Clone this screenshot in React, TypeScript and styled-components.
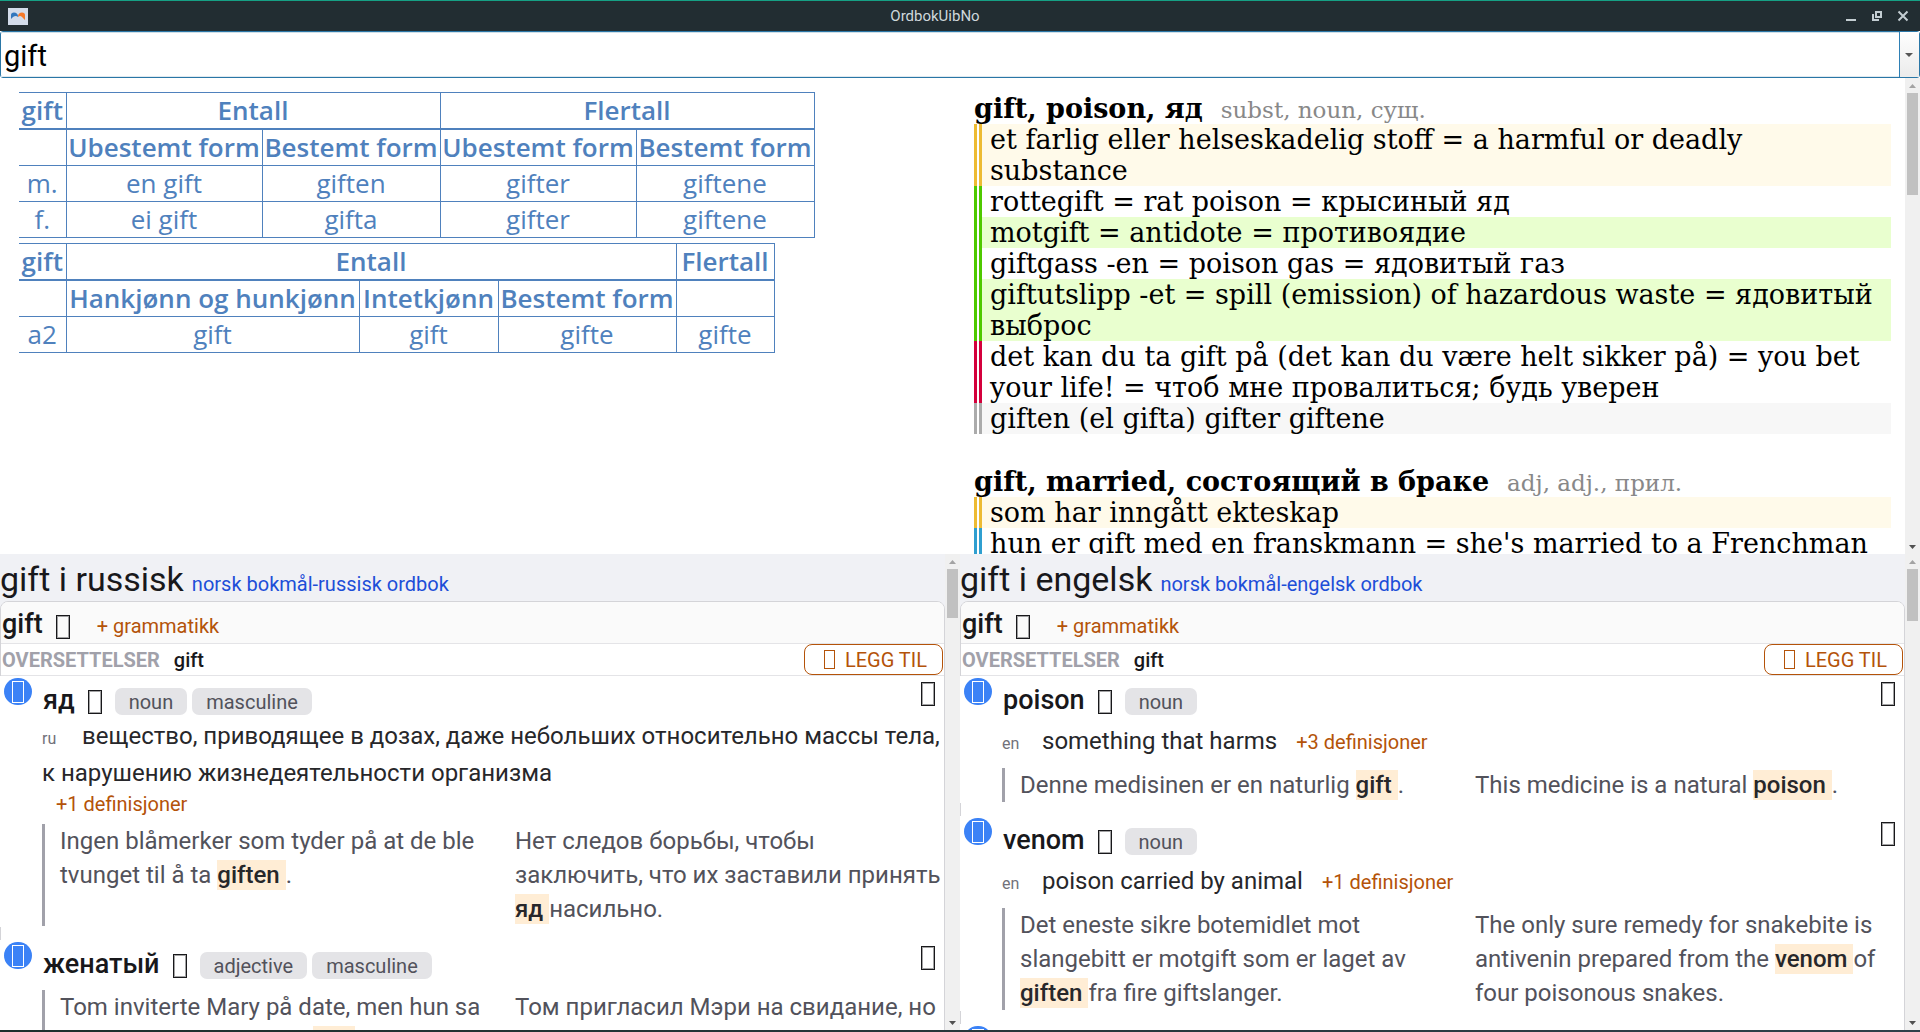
import React, { useState } from 'react';
import styled, { createGlobalStyle, css } from 'styled-components';

const GlobalStyle = createGlobalStyle`
  *, *::before, *::after { box-sizing: border-box; }
  html, body, #root { height: 100%; margin: 0; }
  body { background: #fff; overflow: hidden; font-family: Roboto, sans-serif; }
  button, input { font: inherit; color: inherit; }
`;

/* ---------- window frame ---------- */

const Window = styled.div`
  display: flex;
  flex-direction: column;
  height: 100vh;
  background: #fff;
`;

const TitleBar = styled.header`
  display: flex;
  align-items: center;
  flex: none;
  height: 31px;
  padding: 0 10px 0 8px;
  border-top: 1px solid #16a085;
  background: #222d32;
  color: #cfd8dc;
`;

const WindowTitle = styled.h1`
  flex: 1;
  margin: 0;
  text-align: center;
  font-size: 15px;
  font-weight: 400;
`;

const WindowControls = styled.div`
  display: flex;
  gap: 10px;
`;

const ControlButton = styled.button`
  display: flex;
  width: 16px;
  height: 16px;
  padding: 0;
  border: 0;
  background: none;
  color: #c3cdd2;
`;

const DesktopEdge = styled.div`
  flex: none;
  height: 2px;
  background: linear-gradient(90deg, #1d2f2c, #26363a 50%, #2f404a);
`;

/* ---------- search ---------- */

const SearchBar = styled.form`
  display: flex;
  flex: none;
  height: 47px;
  border: 1px solid #2a76a6;
  border-radius: 3px;
  background: #fff;
`;

const SearchInput = styled.input`
  flex: 1;
  min-width: 0;
  padding: 2px 3px 0;
  border: 0;
  outline: 0;
  background: transparent;
  color: #000;
  font-size: 29px;
  box-shadow: inset 0 1px 0 #cfdfe8, inset 0 -1px 0 #dfe9ef;
`;

const SearchDrop = styled.button`
  display: flex;
  align-items: center;
  justify-content: center;
  width: 20px;
  padding: 0 2px 0 0;
  border: 0;
  border-left: 1px solid #2f80b5;
  background: linear-gradient(#fefefe, #ebebeb);
  color: #555;
`;

/* ---------- panes ---------- */

const Panes = styled.main`
  display: grid;
  flex: 1;
  min-height: 0;
  grid-template-columns: 1fr 1fr;
  grid-template-rows: 1fr 1fr;
`;

const Pane = styled.section`
  display: flex;
  min-width: 0;
  min-height: 0;
  overflow: hidden;
`;

const PaneBody = styled.div`
  flex: 1;
  min-width: 0;
  overflow: hidden;
`;

const Track = styled.div`
  display: flex;
  flex: none;
  flex-direction: column;
  align-items: center;
  width: 15px;
  background: #f0f0f0;
`;

const Arrow = styled.span<{ $dim?: boolean }>`
  display: flex;
  flex: none;
  align-items: center;
  height: 15px;
  color: ${(p) => (p.$dim ? '#a3a3a3' : '#505050')};
`;

const Thumb = styled.span`
  width: 11px;
  margin-bottom: auto;
  background: #c1c1c1;
`;

function Scrollbar({ length }: { length: number }) {
  return (
    <Track aria-hidden="true">
      <Arrow $dim>
        <svg width="7" height="4" viewBox="0 0 7 4"><path d="M3.5 0 7 4H0z" fill="currentColor" /></svg>
      </Arrow>
      <Thumb style={{ height: length }} />
      <Arrow>
        <svg width="7" height="4" viewBox="0 0 7 4"><path d="M0 0H7L3.5 4z" fill="currentColor" /></svg>
      </Arrow>
    </Track>
  );
}

/* ---------- inflection tables ---------- */

const Tables = styled.div`
  display: flex;
  flex-direction: column;
  align-items: flex-start;
  gap: 5px;
  padding: 14px 19px;
`;

const Inflection = styled.table`
  border-collapse: collapse;
  color: #4f81bd;
  font-family: "Trebuchet MS", "Open Sans", sans-serif;
  font-size: 26px;
  line-height: 35px;
  text-align: center;

  th, td {
    height: 36px;
    padding: 0;
    border: 1px solid #4f81bd;
    white-space: nowrap;
  }
  th { font-weight: 600; }
  tr > :first-child { border-left: 0; }
  thead tr:first-child th { border-bottom-width: 2px; }
`;

const Col = styled.col<{ $w: number }>`
  width: ${(p) => p.$w}px;
`;

/* ---------- local dictionary ---------- */

const Article = styled.article`
  padding: 15px 14px 0;
  margin-bottom: 17px;
  color: #000;
  font-family: "DejaVu Serif", serif;
  font-size: 27px;
  line-height: 31px;
`;

const Headword = styled.h2`
  margin: 0;
  font-size: 27px;
  font-weight: 700;
`;

const WordClass = styled.small`
  margin-left: 18px;
  color: #888;
  font-size: 23px;
  font-weight: 400;
  line-height: 1;
`;

const tones = {
  meaning: ['#edbb33', '#fffaea'],
  compound: ['#4fc900', '#fff'],
  compoundAlt: ['#4fc900', '#e9ffcf'],
  idiom: ['#d4003c', '#fff'],
  forms: ['#ababab', '#f7f7f7'],
  example: ['#2f9fd0', '#fff'],
};

/* A twin rule runs down the left side of every line. */
const Line = styled.p<{ $tone: keyof typeof tones }>`
  margin: 0;
  padding: 0 8px 0 16px;
  background: ${({ $tone }) => {
    const [rule, fill] = tones[$tone];
    return `linear-gradient(90deg, ${rule} 3px, #fff 3px 5px, ${rule} 5px 8px, ${fill} 8px)`;
  }};
`;

/* ---------- online dictionary ---------- */

const PageHead = styled.header`
  display: flex;
  align-items: baseline;
  gap: 8px;
  height: 47px;
  background: #f0f1f5;
`;

const PageTitle = styled.h2`
  margin: 0;
  color: #18181b;
  font-size: 34px;
  font-weight: 400;
  line-height: 51px;
`;

const PageLink = styled.a`
  color: #1d4ed8;
  font-size: 20px;
  text-decoration: none;
`;

const CardWrap = styled.div`
  background: linear-gradient(#f0f1f5 10px, #fff 10px);
`;

const Card = styled.div`
  border: 1px solid #d4d4d8;
  border-radius: 8px 8px 0 0;
  background: #fff;
`;

const CardHead = styled.div`
  display: flex;
  align-items: baseline;
  height: 42px;
  padding-left: 1px;
  border-bottom: 1px solid #e4e4e7;
  border-radius: 7px 7px 0 0;
  background: #fafafa;
  color: #18181b;
`;

const Lemma = styled.h3`
  margin: 0;
  color: #18181b;
  font-size: 27px;
  font-weight: 500;
  line-height: 44px;
`;

const EntryWord = styled.h5`
  margin: 0;
  color: #18181b;
  font-size: 27px;
  font-weight: 500;
  line-height: 25px;
`;

const glyphSize = {
  small: css`width: 11px; height: 19px; border: 1px solid currentColor;`,
  badge: css`width: 12px; height: 22px; border: 1px solid currentColor;`,
  large: css`width: 14px; height: 24px; border: 1px solid currentColor; box-shadow: inset 0 0 0 1px rgba(24, 24, 27, 0.4);`,
};

const Glyph = styled.span<{ $size: keyof typeof glyphSize }>`
  display: inline-block;
  flex: none;
  ${(p) => glyphSize[p.$size]}
`;

const IconButton = styled.button`
  display: flex;
  padding: 0;
  border: 0;
  background: none;
  color: #18181b;
`;

const TextButton = styled.button`
  padding: 0;
  border: 0;
  background: none;
  color: #b45309;
  font-size: 20px;
  line-height: 24px;
`;

const HeadIcon = styled.span`
  align-self: center;
  margin: 8px 27px 0 13px;
`;

const SectionHead = styled.div`
  display: flex;
  align-items: center;
  gap: 14px;
  height: 32px;
  padding: 0 1px;
  border-bottom: 1px solid #e4e4e7;
  font-size: 20px;
`;

const SectionTitle = styled.h4`
  margin: 0;
  color: #a1a1aa;
  font-size: 20px;
  font-weight: 700;
`;

const SectionWord = styled.span`
  flex: 1;
  color: #18181b;
  font-weight: 500;
`;

const AddButton = styled.button`
  display: flex;
  align-items: center;
  gap: 10px;
  height: 31px;
  padding: 0 15px 0 19px;
  border: 1px solid #b45309;
  border-radius: 8px;
  background: #fff;
  color: #b45309;
  font-size: 20px;
`;

const Entries = styled.div`
  display: flex;
  flex-direction: column;
  gap: 13px;
`;

/* Each entry spans the card's left border, which shows only between entries. */
const Entry = styled.article`
  display: flex;
  gap: 10px;
  margin-left: -1px;
  padding: 2px 0 1px 4px;
  background: #fff;
`;

const Rank = styled.span`
  display: flex;
  flex: none;
  align-items: center;
  justify-content: center;
  width: 28px;
  height: 27px;
  border-radius: 14px;
  background: #3b82f6;
  color: #fff;
`;

const EntryBody = styled.div`
  flex: 1;
  min-width: 0;
`;

const EntryHead = styled.div`
  display: flex;
  align-items: flex-start;
  height: 40px;
  padding: 10px 9px 0 1px;
  line-height: 28px;
`;

const SpeakIcon = styled(IconButton)`
  margin: 2px 13px 0 13px;
`;

const MenuIcon = styled(IconButton)`
  margin: -6px 0 0 auto;
`;

const Tag = styled.span`
  height: 27px;
  margin-right: 5px;
  padding: 0 14px;
  border-radius: 7px;
  background: #e4e4e7;
  color: #52525b;
  font-size: 20px;
`;

const Definition = styled.div<{ $inline?: boolean }>`
  display: ${(p) => (p.$inline ? 'flex' : 'block')};
  align-items: baseline;
  gap: 19px;
  padding: ${(p) => (p.$inline ? '5px 0 0' : '0')};
  color: #27272a;
  font-size: 24px;
  line-height: 37px;
`;

const Sense = styled.p`
  margin: 0;
`;

const Lang = styled.span`
  display: inline-block;
  width: 40px;
  color: #71717a;
  font-size: 16px;
  line-height: 16px;
`;

const MoreRow = styled.div`
  display: flex;
  padding-left: 14px;
  line-height: 24px;
`;

const Example = styled.div`
  display: grid;
  grid-template-columns: 1fr 1fr;
  gap: 26px;
  margin-top: 8px;
  padding-left: 15px;
  border-left: 3px solid #a1a1aa;
  color: #52525b;
  font-size: 24px;
  line-height: 34px;
`;

const Quote = styled.p`
  margin: 0;
`;

const Mark = styled.mark`
  padding: 1px 0;
  background: #ffedd5;
  color: #27272a;
  font-weight: 500;
  white-space: pre-wrap;
`;

type ExampleText = [string, string, string];

interface EntryData {
  word: string;
  tags: string[];
  lang?: string;
  sense?: string;
  more?: string;
  inline?: boolean;
  from: ExampleText;
  to: ExampleText;
}

function Phrase({ text }: { text: ExampleText }) {
  return (
    <Quote>
      {text[0]}
      {text[1] && <Mark>{text[1] + ' '}</Mark>}
      {text[2]}
    </Quote>
  );
}

function Translation({ entry }: { entry: EntryData }) {
  return (
    <Entry>
      <Rank aria-hidden="true"><Glyph $size="badge" /></Rank>
      <EntryBody>
        <EntryHead>
          <EntryWord>{entry.word}</EntryWord>
          <SpeakIcon type="button" aria-label={`Lytt til ${entry.word}`}><Glyph $size="large" /></SpeakIcon>
          {entry.tags.map((t) => <Tag key={t}>{t}</Tag>)}
          <MenuIcon type="button" aria-label="Meny"><Glyph $size="large" /></MenuIcon>
        </EntryHead>
        {entry.sense && (
          <Definition $inline={entry.inline}>
            <Sense><Lang>{entry.lang}</Lang>{entry.sense}</Sense>
            {entry.inline
              ? <TextButton type="button">{entry.more}</TextButton>
              : <MoreRow><TextButton type="button">{entry.more}</TextButton></MoreRow>}
          </Definition>
        )}
        <Example>
          <Phrase text={entry.from} />
          <Phrase text={entry.to} />
        </Example>
      </EntryBody>
    </Entry>
  );
}

interface DictionaryProps {
  title: string;
  link: string;
  thumb: number;
  entries: EntryData[];
}

function OnlineDictionary({ title, link, thumb, entries }: DictionaryProps) {
  return (
    <Pane>
      <PaneBody>
        <PageHead>
          <PageTitle>{title}</PageTitle>
          <PageLink href="#ordbok">{link}</PageLink>
        </PageHead>
        <CardWrap>
          <Card>
            <CardHead>
              <Lemma>gift</Lemma>
              <HeadIcon><IconButton type="button" aria-label="Lytt til gift"><Glyph $size="large" /></IconButton></HeadIcon>
              <TextButton type="button">+ grammatikk</TextButton>
            </CardHead>
            <SectionHead>
              <SectionTitle>OVERSETTELSER</SectionTitle>
              <SectionWord>gift</SectionWord>
              <AddButton type="button"><Glyph $size="small" />LEGG TIL</AddButton>
            </SectionHead>
            <Entries>
              {entries.map((e) => <Translation key={e.word} entry={e} />)}
            </Entries>
          </Card>
        </CardWrap>
      </PaneBody>
      <Scrollbar length={thumb} />
    </Pane>
  );
}

const russian: EntryData[] = [
  {
    word: 'яд',
    tags: ['noun', 'masculine'],
    lang: 'ru',
    sense: 'вещество, приводящее в дозах, даже небольших относительно массы тела, к нарушению жизнедеятельности организма',
    more: '+1 definisjoner',
    from: ['Ingen blåmerker som tyder på at de ble tvunget til å ta ', 'giften', '.'],
    to: ['Нет следов борьбы, чтобы заключить, что их заставили принять ', 'яд', 'насильно.'],
  },
  {
    word: 'женатый',
    tags: ['adjective', 'masculine'],
    from: ['Tom inviterte Mary på date, men hun sa nei, for hun var allerede ', 'gift', '.'],
    to: ['Том пригласил Мэри на свидание, но она отказалась.', '', ''],
  },
];

const english: EntryData[] = [
  {
    word: 'poison',
    tags: ['noun'],
    lang: 'en',
    sense: 'something that harms',
    more: '+3 definisjoner',
    inline: true,
    from: ['Denne medisinen er en naturlig ', 'gift', '.'],
    to: ['This medicine is a natural ', 'poison', '.'],
  },
  {
    word: 'venom',
    tags: ['noun'],
    lang: 'en',
    sense: 'poison carried by animal',
    more: '+1 definisjoner',
    inline: true,
    from: ['Det eneste sikre botemidlet mot slangebitt er motgift som er laget av ', 'giften', 'fra fire giftslanger.'],
    to: ['The only sure remedy for snakebite is antivenin prepared from the ', 'venom', 'of four poisonous snakes.'],
  },
  {
    word: 'married',
    tags: ['adjective'],
    from: ['Hun er ', 'gift', '.'],
    to: ['She is ', 'married', '.'],
  },
];

export default function App() {
  const [query, setQuery] = useState('gift');
  return (
    <>
      <GlobalStyle />
      <Window>
        <TitleBar>
          <svg width="20" height="17" viewBox="0 0 20 17" aria-hidden="true">
            <rect width="20" height="17" fill="#d3dcea" />
            <path d="M3 11V7Q3 4.500 6 4.500Q9.500 4.500 10 8V9Q8 7 5 9Z" fill="#3277bd" />
            <path d="M17 12V7Q17 4.500 14 4.500Q10.500 4.500 10 8V9Q12 7 14 9Z" fill="#f5792a" />
          </svg>
          <WindowTitle>OrdbokUibNo</WindowTitle>
          <WindowControls>
            <ControlButton type="button" aria-label="Minimer">
              <svg width="16" height="16" viewBox="0 0 16 16"><path d="M4 12h10" stroke="currentColor" strokeWidth="2" /></svg>
            </ControlButton>
            <ControlButton type="button" aria-label="Gjenopprett">
              <svg width="16" height="16" viewBox="0 0 16 16"><path d="M8 4h5v5H8zM5 6v6h6" fill="none" stroke="currentColor" strokeWidth="2" /></svg>
            </ControlButton>
            <ControlButton type="button" aria-label="Lukk">
              <svg width="16" height="16" viewBox="0 0 16 16"><path d="M4.500 3.500l9 9m0-9l-9 9" stroke="currentColor" strokeWidth="2" /></svg>
            </ControlButton>
          </WindowControls>
        </TitleBar>

        <SearchBar role="search" onSubmit={(e) => e.preventDefault()}>
          <SearchInput aria-label="Søk" value={query} onChange={(e) => setQuery(e.target.value)} />
          <SearchDrop type="button" aria-label="Vis historikk">
            <svg width="8" height="4" viewBox="0 0 8 4"><path d="M0 0H8L4 4z" fill="currentColor" /></svg>
          </SearchDrop>
        </SearchBar>

        <Panes>
          <Pane>
            <Tables>
              <Inflection>
                <colgroup><Col $w={47} /><Col $w={196} /><Col $w={178} /><Col $w={196} /><Col $w={178} /></colgroup>
                <thead>
                  <tr><th>gift</th><th colSpan={2}>Entall</th><th colSpan={2}>Flertall</th></tr>
                  <tr><th></th><th>Ubestemt form</th><th>Bestemt form</th><th>Ubestemt form</th><th>Bestemt form</th></tr>
                </thead>
                <tbody>
                  <tr><td>m.</td><td>en gift</td><td>giften</td><td>gifter</td><td>giftene</td></tr>
                  <tr><td>f.</td><td>ei gift</td><td>gifta</td><td>gifter</td><td>giftene</td></tr>
                </tbody>
              </Inflection>
              <Inflection>
                <colgroup><Col $w={47} /><Col $w={293} /><Col $w={139} /><Col $w={178} /><Col $w={98} /></colgroup>
                <thead>
                  <tr><th>gift</th><th colSpan={3}>Entall</th><th>Flertall</th></tr>
                  <tr><th></th><th>Hankjønn og hunkjønn</th><th>Intetkjønn</th><th>Bestemt form</th><th></th></tr>
                </thead>
                <tbody>
                  <tr><td>a2</td><td>gift</td><td>gift</td><td>gifte</td><td>gifte</td></tr>
                </tbody>
              </Inflection>
            </Tables>
          </Pane>

          <Pane>
            <PaneBody>
              <Article>
                <Headword>gift, poison, яд<WordClass>subst, noun, сущ.</WordClass></Headword>
                <Line $tone="meaning">et farlig eller helseskadelig stoff = a harmful or deadly substance</Line>
                <Line $tone="compound">rottegift = rat poison = крысиный яд</Line>
                <Line $tone="compoundAlt">motgift = antidote = противоядие</Line>
                <Line $tone="compound">giftgass -en = poison gas = ядовитый газ</Line>
                <Line $tone="compoundAlt">giftutslipp -et = spill (emission) of hazardous waste = ядовитый выброс</Line>
                <Line $tone="idiom">det kan du ta gift på (det kan du være helt sikker på) = you bet your life! = чтоб мне провалиться; будь уверен</Line>
                <Line $tone="forms">giften (el gifta) gifter giftene</Line>
              </Article>
              <Article>
                <Headword>gift, married, состоящий в браке<WordClass>adj, adj., прил.</WordClass></Headword>
                <Line $tone="meaning">som har inngått ekteskap</Line>
                <Line $tone="example">hun er gift med en franskmann = she's married to a Frenchman</Line>
              </Article>
            </PaneBody>
            <Scrollbar length={102} />
          </Pane>

          <OnlineDictionary title="gift i russisk" link="norsk bokmål-russisk ordbok" thumb={49} entries={russian} />
          <OnlineDictionary title="gift i engelsk" link="norsk bokmål-engelsk ordbok" thumb={52} entries={english} />
        </Panes>
        <DesktopEdge />
      </Window>
    </>
  );
}
